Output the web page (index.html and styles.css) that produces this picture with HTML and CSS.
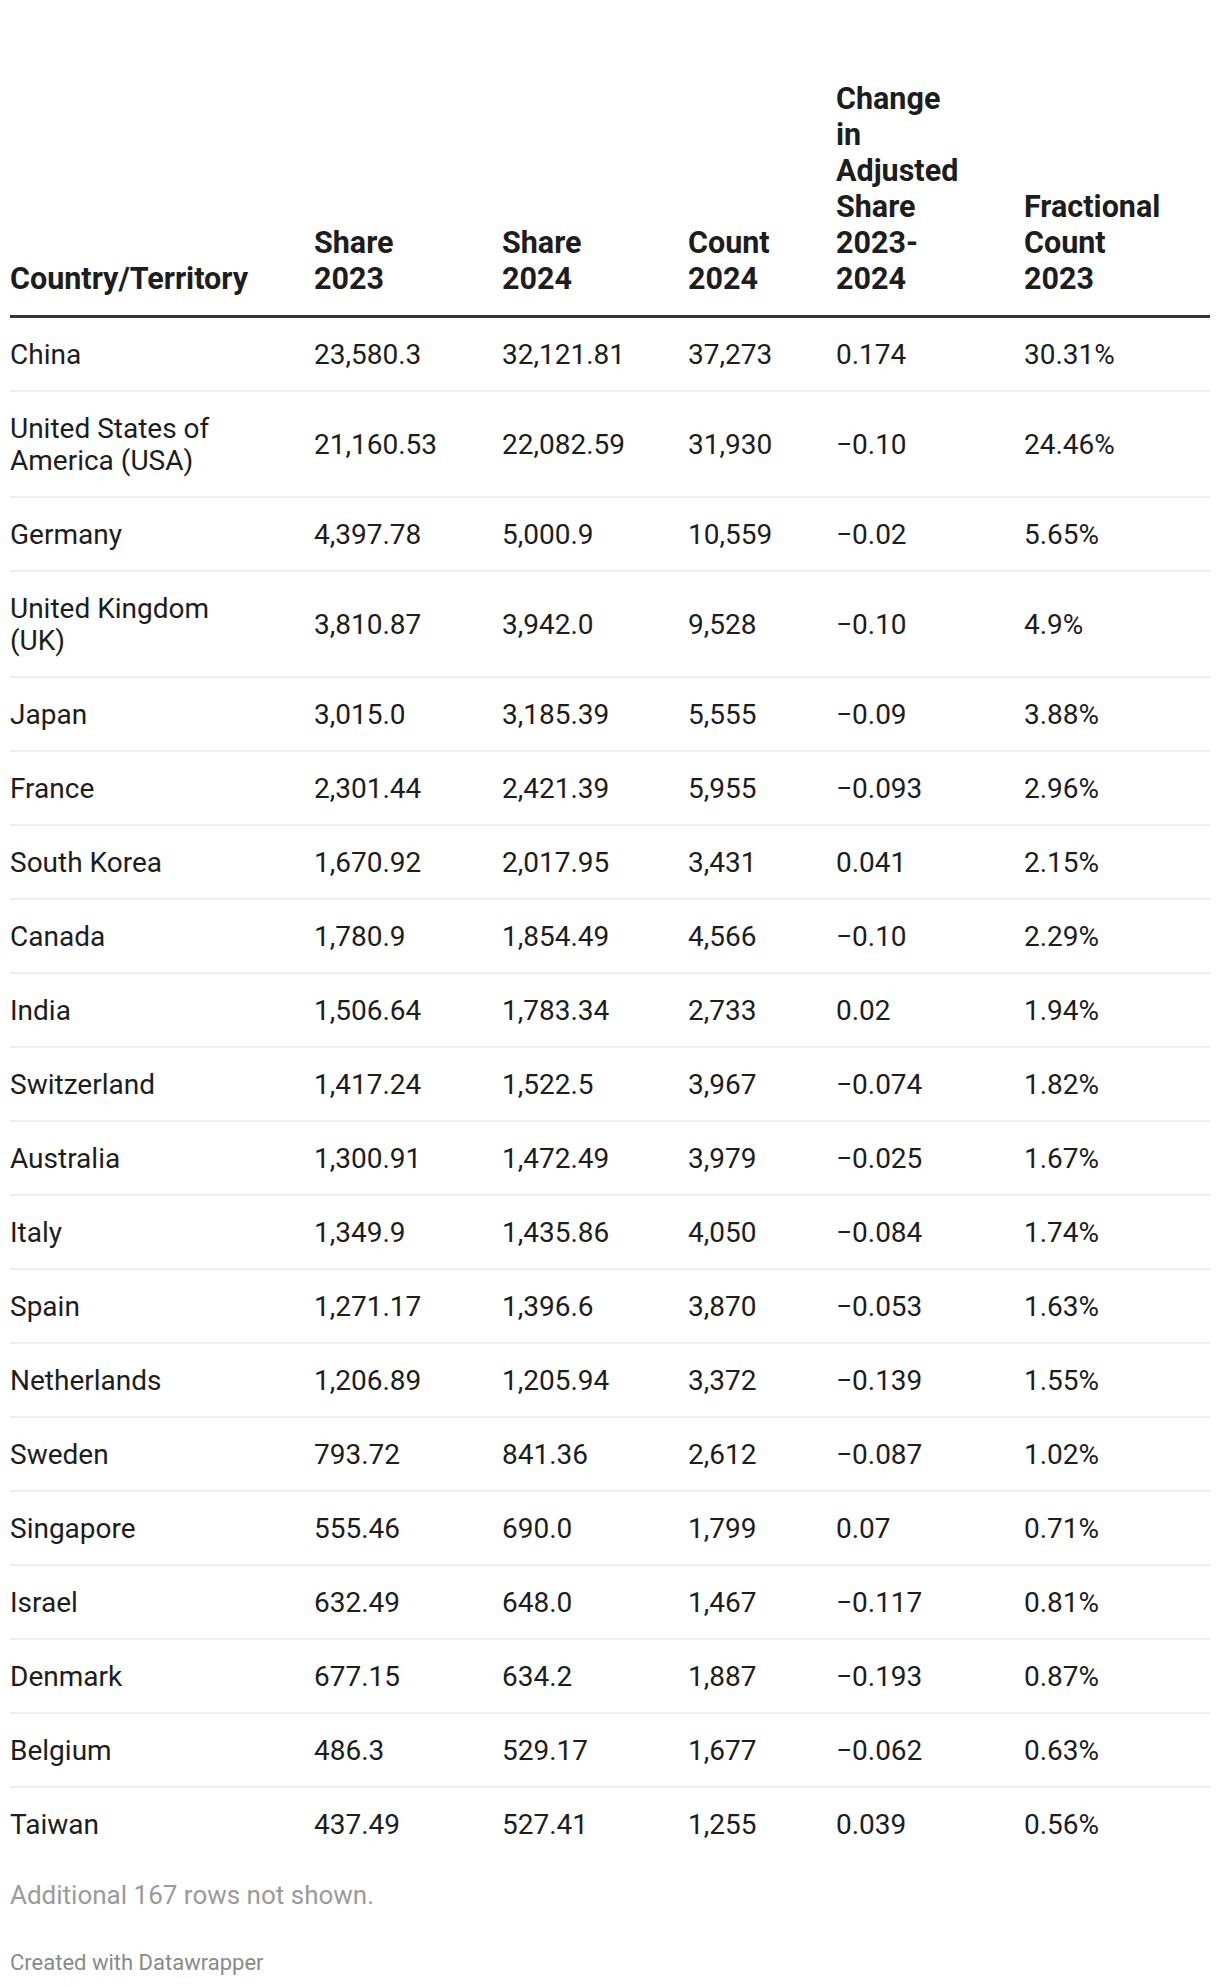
FILE: index.html
```html
<!DOCTYPE html>
<html lang="en">
<head>
<meta charset="utf-8">
<title>Table</title>
<link rel="stylesheet" href="styles.css">
</head>
<body>
<div class="chart">
  <table class="data">
    <colgroup>
      <col class="c1"><col class="c2"><col class="c3"><col class="c4"><col class="c5"><col class="c6">
    </colgroup>
    <thead>
      <tr>
        <th><div class="h">Country/Territory</div></th>
        <th><div class="h">Share 2023</div></th>
        <th><div class="h">Share 2024</div></th>
        <th><div class="h">Count 2024</div></th>
        <th><div class="h">Change in Adjusted Share 2023-2024</div></th>
        <th><div class="h">Fractional Count 2023</div></th>
      </tr>
    </thead>
    <tbody>
      <tr><td>China</td><td>23,580.3</td><td>32,121.81</td><td>37,273</td><td>0.174</td><td>30.31%</td></tr>
      <tr><td>United States of America (USA)</td><td>21,160.53</td><td>22,082.59</td><td>31,930</td><td>−0.10</td><td>24.46%</td></tr>
      <tr><td>Germany</td><td>4,397.78</td><td>5,000.9</td><td>10,559</td><td>−0.02</td><td>5.65%</td></tr>
      <tr><td>United Kingdom (UK)</td><td>3,810.87</td><td>3,942.0</td><td>9,528</td><td>−0.10</td><td>4.9%</td></tr>
      <tr><td>Japan</td><td>3,015.0</td><td>3,185.39</td><td>5,555</td><td>−0.09</td><td>3.88%</td></tr>
      <tr><td>France</td><td>2,301.44</td><td>2,421.39</td><td>5,955</td><td>−0.093</td><td>2.96%</td></tr>
      <tr><td>South Korea</td><td>1,670.92</td><td>2,017.95</td><td>3,431</td><td>0.041</td><td>2.15%</td></tr>
      <tr><td>Canada</td><td>1,780.9</td><td>1,854.49</td><td>4,566</td><td>−0.10</td><td>2.29%</td></tr>
      <tr><td>India</td><td>1,506.64</td><td>1,783.34</td><td>2,733</td><td>0.02</td><td>1.94%</td></tr>
      <tr><td>Switzerland</td><td>1,417.24</td><td>1,522.5</td><td>3,967</td><td>−0.074</td><td>1.82%</td></tr>
      <tr><td>Australia</td><td>1,300.91</td><td>1,472.49</td><td>3,979</td><td>−0.025</td><td>1.67%</td></tr>
      <tr><td>Italy</td><td>1,349.9</td><td>1,435.86</td><td>4,050</td><td>−0.084</td><td>1.74%</td></tr>
      <tr><td>Spain</td><td>1,271.17</td><td>1,396.6</td><td>3,870</td><td>−0.053</td><td>1.63%</td></tr>
      <tr><td>Netherlands</td><td>1,206.89</td><td>1,205.94</td><td>3,372</td><td>−0.139</td><td>1.55%</td></tr>
      <tr><td>Sweden</td><td>793.72</td><td>841.36</td><td>2,612</td><td>−0.087</td><td>1.02%</td></tr>
      <tr><td>Singapore</td><td>555.46</td><td>690.0</td><td>1,799</td><td>0.07</td><td>0.71%</td></tr>
      <tr><td>Israel</td><td>632.49</td><td>648.0</td><td>1,467</td><td>−0.117</td><td>0.81%</td></tr>
      <tr><td>Denmark</td><td>677.15</td><td>634.2</td><td>1,887</td><td>−0.193</td><td>0.87%</td></tr>
      <tr><td>Belgium</td><td>486.3</td><td>529.17</td><td>1,677</td><td>−0.062</td><td>0.63%</td></tr>
      <tr><td>Taiwan</td><td>437.49</td><td>527.41</td><td>1,255</td><td>0.039</td><td>0.56%</td></tr>
    </tbody>
  </table>
  <p class="more">Additional 167 rows not shown.</p>
  <p class="credit">Created with Datawrapper</p>
</div>
</body>
</html>
```

FILE: styles.css
```css
html, body {
  margin: 0;
  padding: 0;
  background: #ffffff;
}

body {
  font-family: Roboto, "Liberation Sans", Arial, sans-serif;
  color: #1d1d1d;
}

.chart {
  padding: 81px 10px 0 10px;
}

.data {
  width: 1200px;
  border-collapse: collapse;
  table-layout: fixed;
}

.c1 { width: 304px; }
.c2 { width: 188px; }
.c3 { width: 186px; }
.c4 { width: 148px; }
.c5 { width: 188px; }
.c6 { width: 186px; }

.data th {
  text-align: left;
  vertical-align: bottom;
  font-weight: 700;
  font-size: 30.5px;
  line-height: 36px;
  padding: 0 0 18px 0;
  border-bottom: 3px solid #333333;
  color: #1d1d1d;
}

.h {
  width: min-content;
}

.data th:first-child .h {
  width: auto;
  white-space: nowrap;
}

.data td {
  font-size: 28px;
  line-height: 32px;
  padding: 21px 20px 19px 0;
  border-bottom: 2px solid #eeeeee;
  vertical-align: middle;
}

.data td:first-child {
  padding-right: 50px;
}

.data tbody tr:last-child td {
  border-bottom: none;
}

.more {
  margin: 19px 0 0 0;
  font-size: 26px;
  line-height: 32px;
  color: #9a9a9a;
}

.credit {
  margin: 39px 0 0 0;
  font-size: 22px;
  line-height: 26px;
  color: #8a8a8a;
}
```
